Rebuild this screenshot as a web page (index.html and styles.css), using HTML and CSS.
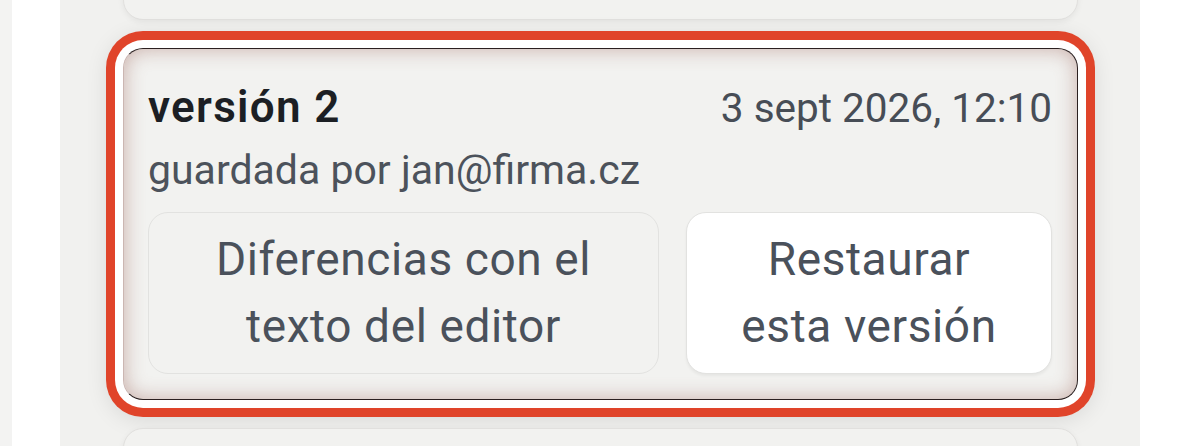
FILE: index.html
```html
<!DOCTYPE html>
<html lang="es">
<head>
<meta charset="utf-8">
<title>Versiones</title>
<link rel="stylesheet" href="styles.css">
</head>
<body>
<div class="page">
  <div class="strip"></div>
  <div class="gutter"></div>
  <main class="panel">
    <div class="list">
      <div class="card card-prev"></div>
      <div class="card card-active">
        <div class="card-head">
          <span class="title">versión 2</span>
          <span class="date">3 sept 2026, 12:10</span>
        </div>
        <div class="author">guardada por jan@firma.cz</div>
        <div class="actions">
          <button class="btn btn-diff">Diferencias con el texto del editor</button>
          <button class="btn btn-restore">Restaurar esta versión</button>
        </div>
      </div>
      <div class="card card-next"></div>
    </div>
  </main>
  <div class="gutter-right"></div>
</div>
</body>
</html>
```
FILE: styles.css
```css
* { box-sizing: border-box; }
html, body { margin: 0; padding: 0; }
body {
  width: 1200px;
  height: 446px;
  overflow: hidden;
  background: #ffffff;
  font-family: Roboto, "Liberation Sans", sans-serif;
}
.page {
  display: flex;
  height: 446px;
}
.strip { width: 12px; background: #f3f3f2; }
.gutter { width: 48px; background: #ffffff; }
.gutter-right { flex: 1; background: #ffffff; }
.panel {
  width: 1080px;
  background: #f1f1ef;
  padding: 0 62px 0 63px;
  overflow: hidden;
}
.list {
  display: flex;
  flex-direction: column;
  gap: 28px;
  margin-top: -100px;
}
.card {
  border-radius: 20px;
  background: #f2f2f0;
  border: 1px solid #e1e0de;
}
.card-prev, .card-next {
  height: 120px;
  box-shadow: 0 2px 6px rgba(0,0,0,0.06);
}
.card-active {
  border-color: #2b2020;
  border-left-color: #cbb6b2;
  padding: 28px 25px 25px 24px;
  box-shadow:
    inset 0 0 20px rgba(150, 90, 80, 0.45),
    0 0 0 8px #ffffff,
    0 0 0 17px #e0442a,
    0 4px 22px 16px rgba(0, 0, 0, 0.10);
}
.card-head {
  display: flex;
  justify-content: space-between;
  align-items: baseline;
  line-height: 60px;
}
.title {
  font-size: 44px;
  font-weight: 600;
  letter-spacing: 1.3px;
  color: #1c1f24;
}
.date {
  font-size: 40.5px;
  color: #474d56;
}
.author {
  margin-top: 7px;
  font-size: 41px;
  line-height: 50px;
  color: #4c525b;
}
.actions {
  display: grid;
  grid-template-columns: 511fr 366fr;
  gap: 27px;
  margin-top: 17px;
}
.btn {
  font-family: inherit;
  font-size: 46px;
  letter-spacing: 0.6px;
  line-height: 67px;
  color: #4a515b;
  text-align: center;
  padding: 12px 40px;
  border-radius: 20px;
  border: 1px solid #e2e2e0;
  height: 162px;
}
.btn-diff { background: #f2f2f0; }
.btn-restore {
  background: #ffffff;
  box-shadow: 0 2px 3px rgba(0,0,0,0.05);
}
```
